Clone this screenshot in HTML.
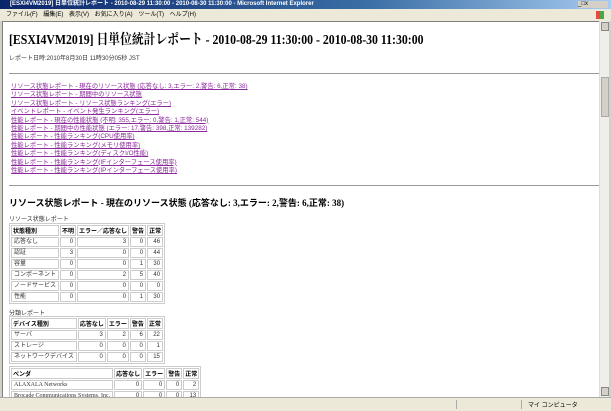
<!DOCTYPE html>
<html><head><meta charset="utf-8"><style>
*{margin:0;padding:0;box-sizing:border-box}
body{width:611px;height:411px;overflow:hidden;background:#d4d0c8;font-family:"Liberation Sans","Noto Sans CJK JP",sans-serif;position:relative}
.a{position:absolute}
#title{left:0;top:0;width:611px;height:9px;background:linear-gradient(90deg,#0a246a,#3a6ea5 60%,#a6caf0);color:#fff;font-size:6px;line-height:9px;padding-left:10px;font-weight:bold}
#menu{left:0;top:9px;width:611px;height:12px;background:#ece9d8;font-size:6px;line-height:12px;color:#000;padding-left:6px;word-spacing:4px}
#content{left:2px;top:21px;width:597px;height:376px;background:#fff;border-left:1px solid #808080;border-top:1px solid #808080;overflow:hidden}
#sb{left:599px;top:21px;width:10px;height:376px;background:#eeeeea;border-left:1px solid #ddd}
#status{left:0;top:397px;width:611px;height:14px;background:#ece9d8;border-top:1px solid #aaa}
h1{position:absolute;left:6px;top:9px;font:bold 11.8px/16px "Liberation Serif","Noto Serif CJK SC",serif;white-space:nowrap;color:#000;transform:scaleY(1.2);transform-origin:left center}
.sm{font-size:6px;color:#333;white-space:nowrap}
hr{position:absolute;left:6px;width:591px;border:0;border-top:1px solid #999}
.links{left:8px;top:61px;font-size:6.3px;line-height:8.4px;color:#8b2a9b}
.links div{text-decoration:underline;white-space:nowrap}
h2{position:absolute;left:6px;top:175px;font:bold 9px/12px "Liberation Serif","Noto Sans CJK JP",serif;white-space:nowrap}
table{position:absolute;border-collapse:separate;border-spacing:1px;border:1px solid #ccc;font-size:6px;color:#333}
td{border:1px solid #ccc;height:9.5px;padding:0 2px;text-align:right;line-height:8px;white-space:nowrap}
td:first-child{text-align:left}
th{border:1px solid #ccc;font-weight:bold;text-align:left;padding:0 1px;height:10px;color:#000;white-space:nowrap}
</style></head><body>
<div id="title" class="a">[ESXI4VM2019] 日単位統計レポート - 2010-08-29 11:30:00 - 2010-08-30 11:30:00 - Microsoft Internet Explorer</div>
<div class="a" style="left:578px;top:1px;width:30px;height:7px;font-size:6px;color:#000;background:#d4d0c8">_□x</div>
<div id="menu" class="a">ファイル(F) 編集(E) 表示(V) お気に入り(A) ツール(T) ヘルプ(H)</div>
<div class="a" style="left:596px;top:11px;width:8px;height:8px;background:linear-gradient(90deg,#e44 50%,#4a4 50%)"></div>
<div id="content" class="a">
<h1>[ESXI4VM2019] 日単位統計レポート - 2010-08-29 11:30:00 - 2010-08-30 11:30:00</h1>
<div class="a sm" style="left:6px;top:31px">レポート日時:2010年8月30日 11時30分05秒 JST</div>
<hr style="top:51px">
<div class="a links">
<div>リソース状態レポート - 現在のリソース状態 (応答なし: 3,エラー: 2,警告: 6,正常: 38)</div>
<div>リソース状態レポート - 期間中のリソース状態</div>
<div>リソース状態レポート - リソース状態ランキング(エラー)</div>
<div>イベントレポート - イベント発生ランキング(エラー)</div>
<div>性能レポート - 現在の性能状態 (不明: 355,エラー: 0,警告: 1,正常: 544)</div>
<div>性能レポート - 期間中の性能状態 (エラー: 17,警告: 398,正常: 139282)</div>
<div>性能レポート - 性能ランキング(CPU使用率)</div>
<div>性能レポート - 性能ランキング(メモリ使用率)</div>
<div>性能レポート - 性能ランキング(ディスクI/O性能)</div>
<div>性能レポート - 性能ランキング(IFインターフェース使用率)</div>
<div>性能レポート - 性能ランキング(IPインターフェース使用率)</div>
</div>
<hr style="top:163px">
<h2>リソース状態レポート - 現在のリソース状態 (応答なし: 3,エラー: 2,警告: 6,正常: 38)</h2>
<div class="a sm" style="left:6px;top:192px">リソース状態レポート</div>
<table style="left:6px;top:201px;width:147px">
<tr><th style="width:46px">状態種別</th><th style="width:15px">不明</th><th>エラー／応答なし</th><th style="width:14px">警告</th><th style="width:15px">正常</th></tr>
<tr><td>応答なし</td><td>0</td><td>3</td><td>0</td><td>46</td></tr>
<tr><td>認証</td><td>3</td><td>0</td><td>0</td><td>44</td></tr>
<tr><td>容量</td><td>0</td><td>0</td><td>1</td><td>30</td></tr>
<tr><td>コンポーネント</td><td>0</td><td>2</td><td>5</td><td>40</td></tr>
<tr><td>ノードサービス</td><td>0</td><td>0</td><td>0</td><td>0</td></tr>
<tr><td>性能</td><td>0</td><td>0</td><td>1</td><td>30</td></tr>
</table>
<div class="a sm" style="left:6px;top:286px">分類レポート</div>
<table style="left:6px;top:294px;width:129px">
<tr><th style="width:53px">デバイス種別</th><th style="width:25px">応答なし</th><th style="width:18px">エラー</th><th style="width:15px">警告</th><th>正常</th></tr>
<tr><td>サーバ</td><td>3</td><td>2</td><td>6</td><td>22</td></tr>
<tr><td>ストレージ</td><td>0</td><td>0</td><td>0</td><td>1</td></tr>
<tr><td>ネットワークデバイス</td><td>0</td><td>0</td><td>0</td><td>15</td></tr>
</table>
<table style="left:6px;top:344px;width:167px">
<tr><th style="width:90px">ベンダ</th><th style="width:26px">応答なし</th><th style="width:19px">エラー</th><th style="width:16px">警告</th><th>正常</th></tr>
<tr><td style="font-family:'Liberation Serif',serif">ALAXALA Networks</td><td>0</td><td>0</td><td>0</td><td>2</td></tr>
<tr><td style="font-family:'Liberation Serif',serif">Brocade Communications Systems, Inc.</td><td>0</td><td>0</td><td>0</td><td>13</td></tr>
</table>
</div>
<div id="sb" class="a"><div class="a" style="left:1px;top:1px;width:8px;height:9px;background:#d4d0c8;border:1px solid #888"></div><div class="a" style="left:1px;top:56px;width:8px;height:40px;background:#d4d0c8;border:1px solid #aaa"></div><div class="a" style="left:1px;bottom:1px;width:8px;height:9px;background:#d4d0c8;border:1px solid #888"></div></div>
<div id="status" class="a"><div class="a" style="left:528px;top:2px;font-size:6px;color:#000">マイ コンピュータ</div><div class="a" style="left:456px;top:2px;width:66px;height:9px;border-left:1px solid #aaa;border-right:1px solid #aaa"></div></div>
</body></html>
